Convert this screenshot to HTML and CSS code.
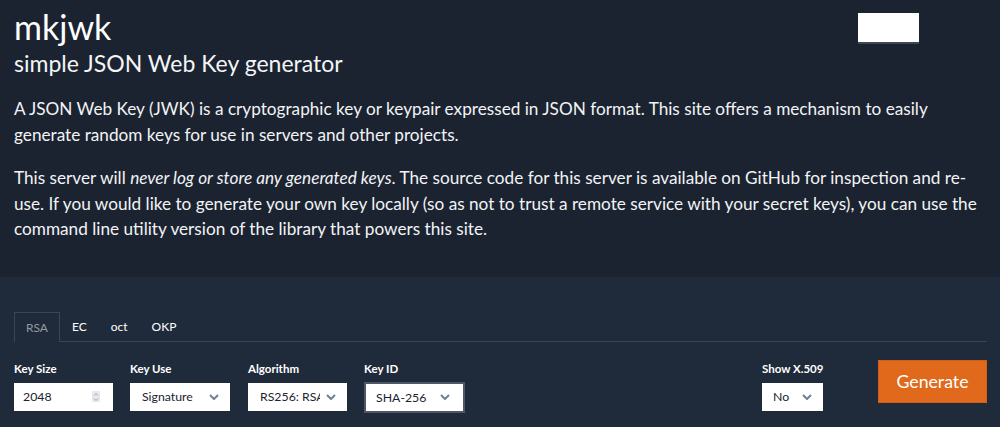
FILE: index.html
```html
<!DOCTYPE html>
<html lang="en">
<head>
<meta charset="utf-8">
<title>mkjwk - simple JSON Web Key generator</title>
<link rel="stylesheet" href="styles.css">
</head>
<body>
<header class="hero">
  <h1 class="title">mkjwk</h1>
  <h2 class="subtitle">simple JSON Web Key generator</h2>
  <p class="intro">A JSON Web Key (JWK) is a cryptographic key or keypair expressed in JSON format. This site offers a mechanism to easily generate random keys for use in servers and other projects.</p>
  <p class="intro">This server will <em>never log or store any generated keys</em>. The source code for this server is available on GitHub for inspection and re-use. If you would like to generate your own key locally (so as not to trust a remote service with your secret keys), you can use the command line utility version of the library that powers this site.</p>
  <div class="gh-button"></div>
</header>
<main class="generator">
  <nav class="tabs">
    <span class="tab active">RSA</span>
    <span class="tab">EC</span>
    <span class="tab">oct</span>
    <span class="tab">OKP</span>
  </nav>
  <div class="form-row">
    <div class="fields">
      <div class="field w-size">
        <div class="label">Key Size</div>
        <div class="control number">
          <span class="value">2048</span>
          <span class="spinner">
            <svg width="8" height="10" viewBox="0 0 8 10"><polyline points="2,3.5 4,1.5 6,3.5" fill="none" stroke="#9aa3ad" stroke-width="1"/><polyline points="2,6.5 4,8.5 6,6.5" fill="none" stroke="#9aa3ad" stroke-width="1"/></svg>
          </span>
        </div>
      </div>
      <div class="field w-use">
        <div class="label">Key Use</div>
        <div class="control select">
          <span class="value">Signature</span>
          <svg class="chev" width="10" height="6" viewBox="0 0 10 6"><polyline points="1,1 5,5 9,1" fill="none" stroke="#6f8094" stroke-width="2"/></svg>
        </div>
      </div>
      <div class="field w-alg">
        <div class="label">Algorithm</div>
        <div class="control select">
          <span class="value clip">RS256: RSA</span>
          <svg class="chev" width="10" height="6" viewBox="0 0 10 6"><polyline points="1,1 5,5 9,1" fill="none" stroke="#6f8094" stroke-width="2"/></svg>
        </div>
      </div>
      <div class="field w-kid">
        <div class="label">Key ID</div>
        <div class="control select focused">
          <span class="value">SHA-256</span>
          <svg class="chev" width="10" height="6" viewBox="0 0 10 6"><polyline points="1,1 5,5 9,1" fill="none" stroke="#6f8094" stroke-width="2"/></svg>
        </div>
      </div>
    </div>
    <div class="field w-x509">
      <div class="label">Show X.509</div>
      <div class="control select small">
        <span class="value">No</span>
        <svg class="chev" width="10" height="6" viewBox="0 0 10 6"><polyline points="1,1 5,5 9,1" fill="none" stroke="#6f8094" stroke-width="2"/></svg>
      </div>
    </div>
    <button class="generate" type="button">Generate</button>
  </div>
</main>
</body>
</html>
```

FILE: styles.css
```css
* { box-sizing: border-box; }

html, body {
  margin: 0;
  padding: 0;
  background: #1f2b3a;
  font-family: Lato, "Open Sans", "Liberation Sans", sans-serif;
  color: #f2f4f6;
}

.hero {
  position: relative;
  background: #1b2331;
  padding: 8px 11px 35px 14px;
}

.title {
  margin: 0;
  font-size: 34px;
  line-height: 37px;
  font-weight: 400;
  color: #ffffff;
}

.subtitle {
  margin: 3px 0 0 0;
  font-size: 23px;
  line-height: 30px;
  font-weight: 400;
  color: #f4f5f7;
}

.intro {
  margin: 18px 0 0 0;
  font-size: 17.2px;
  line-height: 25.5px;
  color: #f2f3f5;
}

.intro + .intro { margin-top: 18px; }

.gh-button {
  position: absolute;
  left: 858px;
  top: 13px;
  width: 61px;
  height: 31px;
  background: #ffffff;
  border-bottom: 2px solid #3e4853;
}

.generator {
  padding: 35px 13px 20px 14px;
}

.tabs {
  display: flex;
  border-bottom: 1px solid #3a4654;
  height: 30px;
}

.tab {
  display: flex;
  align-items: center;
  padding: 0 11px;
  font-size: 12px;
  color: #ffffff;
  border: 1px solid transparent;
  border-bottom: none;
}

.tab.active {
  color: #8f9aa6;
  border-color: #3a4654;
  background: #1f2b3a;
  margin-bottom: -1px;
}

.form-row {
  display: flex;
  align-items: flex-start;
  margin-top: 18px;
}

.fields {
  display: flex;
  gap: 17px;
  padding-top: 2px;
}

.field { display: flex; flex-direction: column; }
.w-x509 { margin-left: auto; padding-top: 2px; width: 61px; }

.w-size { width: 99px; }
.w-use { width: 100px; margin-right: 1px; }
.w-alg { width: 99px; }
.w-kid { width: 101px; }

.label {
  font-size: 11.5px;
  line-height: 14px;
  font-weight: 700;
  color: #ffffff;
  margin-bottom: 7px;
  white-space: nowrap;
}

.control {
  height: 28px;
  background: #ffffff;
  color: #1c2330;
  font-size: 12.3px;
  display: flex;
  align-items: center;
  justify-content: space-between;
}

.control.number { padding: 0 13px 0 9px; }
.control.select { padding: 0 11px 0 12px; }
.control.small { padding: 0 11px 0 11px; }

.control.focused {
  height: 31px;
  margin-top: -1px;
  border: 2px solid #4e5966;
  padding: 0 13px 0 10px;
}

.value { white-space: nowrap; }

.clip {
  overflow: hidden;
  width: 60px;
  display: block;
}

.spinner {
  width: 8px;
  height: 11px;
  background: #e7e8ee;
  display: flex;
  align-items: center;
  justify-content: center;
}

.spinner svg { display: block; }
.chev { display: block; flex: none; }

.generate {
  margin-left: 55px;
  width: 109px;
  height: 43px;
  background: #e0691b;
  border: 1px solid #d25f12;
  color: #ffffff;
  font-family: Lato, "Open Sans", "Liberation Sans", sans-serif;
  font-size: 17.7px;
  padding: 0;
  cursor: pointer;
}
```
